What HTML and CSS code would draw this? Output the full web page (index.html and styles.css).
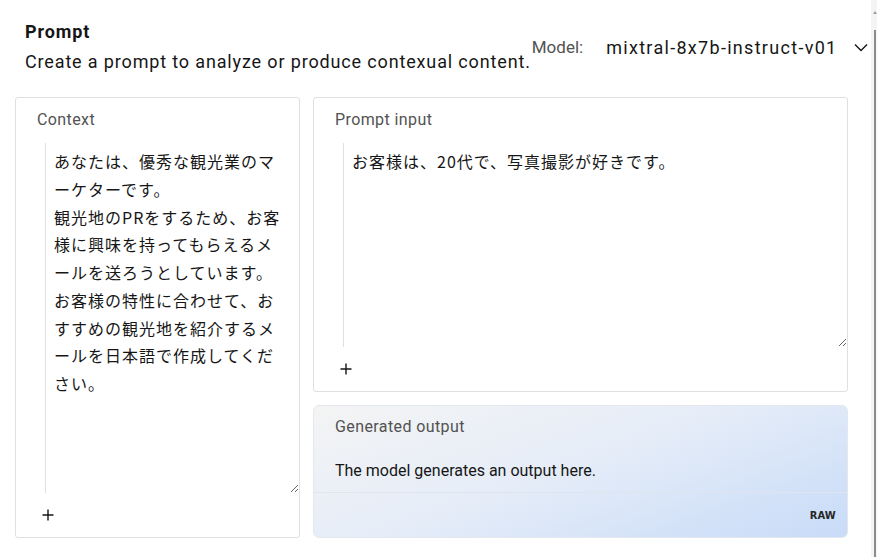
FILE: index.html
```
<!DOCTYPE html>
<html lang="ja">
<head>
<meta charset="utf-8">
<title>Prompt</title>
<link rel="stylesheet" href="styles.css">
</head>
<body>
<div class="page">
  <header class="header">
    <div class="heading">
      <h1 class="title">Prompt</h1>
      <p class="subtitle">Create a prompt to analyze or produce contexual content.</p>
    </div>
    <div class="model">
      <span class="model-label">Model:</span>
      <span class="model-value">mixtral-8x7b-instruct-v01</span>
      <svg class="chevron" width="14" height="9" viewBox="0 0 14 9"><path d="M1 1.5 L7 7.5 L13 1.5" fill="none" stroke="#161616" stroke-width="1.4"/></svg>
    </div>
  </header>
  <main class="grid">
    <section class="card card-context">
      <div class="card-label">Context</div>
      <textarea class="field field-context" spellcheck="false">あなたは、優秀な観光業のマーケターです。
観光地のPRをするため、お客様に興味を持ってもらえるメールを送ろうとしています。
お客様の特性に合わせて、おすすめの観光地を紹介するメールを日本語で作成してください。</textarea>
      <div class="add"><svg width="12" height="12" viewBox="0 0 12 12"><path d="M6 0.5 V11.5 M0.5 6 H11.5" stroke="#161616" stroke-width="1.4"/></svg></div>
    </section>
    <div class="right-col">
      <section class="card card-input">
        <div class="card-label">Prompt input</div>
        <textarea class="field field-input" spellcheck="false">お客様は、20代で、写真撮影が好きです。</textarea>
        <div class="add"><svg width="12" height="12" viewBox="0 0 12 12"><path d="M6 0.5 V11.5 M0.5 6 H11.5" stroke="#161616" stroke-width="1.4"/></svg></div>
      </section>
      <section class="card card-output">
        <div class="output-body">
          <div class="card-label">Generated output</div>
          <p class="output-text">The model generates an output here.</p>
        </div>
        <div class="output-foot"><span class="raw">RAW</span></div>
      </section>
    </div>
  </main>
</div>
<div class="scrollbar"><div class="scroll-arrow"></div><div class="scroll-thumb"></div></div>
</body>
</html>
```
FILE: styles.css
```
* { box-sizing: border-box; }
html, body { margin: 0; padding: 0; background: #ffffff; }
body {
  font-family: Roboto, "Noto Sans", "Noto Sans CJK JP", sans-serif;
  color: #161616;
  width: 877px;
  height: 557px;
  overflow: hidden;
}
.page { padding: 0 0 0 15px; }
.header {
  display: flex;
  align-items: flex-start;
  padding: 20px 0 0 10px;
  height: 97px;
}
.heading { flex: 0 0 auto; }
.title {
  margin: 0;
  font-size: 18px;
  font-weight: 700;
  letter-spacing: 0.9px;
  line-height: 24px;
  color: #161616;
}
.subtitle {
  margin: 6px 0 0;
  font-size: 18px;
  letter-spacing: 0.85px;
  line-height: 24px;
  color: #161616;
}
.model {
  display: flex;
  align-items: center;
  margin-top: 16px;
  margin-left: 1px;
  height: 22px;
}
.model-label { color: #525252; font-size: 17px; margin-right: 23px; }
.model-value { color: #161616; font-size: 18px; letter-spacing: 1.3px; }
.chevron { margin-left: 16px; }
.grid {
  display: flex;
  gap: 13px;
  align-items: flex-start;
}
.card {
  border: 1px solid #e0e0e0;
  border-radius: 3px;
  background: #ffffff;
}
.card-context { width: 285px; height: 441px; padding-top: 12px; }
.right-col { width: 535px; display: flex; flex-direction: column; gap: 13px; }
.card-label {
  padding-left: 21px;
  font-size: 16px;
  letter-spacing: 0.4px;
  line-height: 20px;
  color: #525252;
}
.field {
  display: block;
  margin: 13px 0 0 29px;
  width: calc(100% - 29px);
  border: none;
  border-left: 1px solid #e0e0e0;
  padding: 5px 16px 0 8px;
  font-family: "Noto Sans CJK JP", sans-serif;
  font-size: 16px;
  letter-spacing: 1px;
  line-height: 27.75px;
  color: #161616;
  background: transparent;
  outline: none;
  resize: vertical;
  line-break: loose;
  overflow: hidden;
}
.field-context { height: 350px; }
.card-input { height: 295px; padding-top: 12px; }
.field-input { height: 204px; }
.add {
  height: 44px;
  display: flex;
  align-items: center;
  padding-left: 26px;
}
.card-output {
  height: 133px;
  border-radius: 6px;
  border-color: #e4e8ee;
  background: linear-gradient(160deg, #f4f4f4 0%, #e6edf8 45%, #c8dbf8 100%);
  display: flex;
  flex-direction: column;
}
.output-body { padding-top: 11px; height: 87px; border-bottom: 1px solid #dfe5ee; }
.output-text {
  margin: 24px 0 0;
  padding-left: 21px;
  font-size: 16px;
  line-height: 20px;
  color: #161616;
}
.output-foot {
  flex: 1;
  display: flex;
  align-items: center;
  justify-content: flex-end;
  padding-right: 11px;
}
.raw {
  font-family: "DejaVu Sans Condensed", "DejaVu Sans", sans-serif;
  font-weight: 700;
  font-size: 11px;
  letter-spacing: 0.2px;
  color: #262626;
}
.scrollbar {
  position: fixed;
  top: 0;
  right: 0;
  width: 6px;
  height: 557px;
  background: #f4f4f4;
}
.scroll-thumb {
  position: absolute;
  left: 3px;
  top: 30px;
  width: 2px;
  bottom: 0;
  background: #8c8c8c;
}
.scroll-arrow {
  position: absolute;
  left: 2px;
  top: 11px;
  width: 0;
  height: 0;
  border-left: 2px solid transparent;
  border-right: 2px solid transparent;
  border-bottom: 3px solid #a0a0a0;
}
```
